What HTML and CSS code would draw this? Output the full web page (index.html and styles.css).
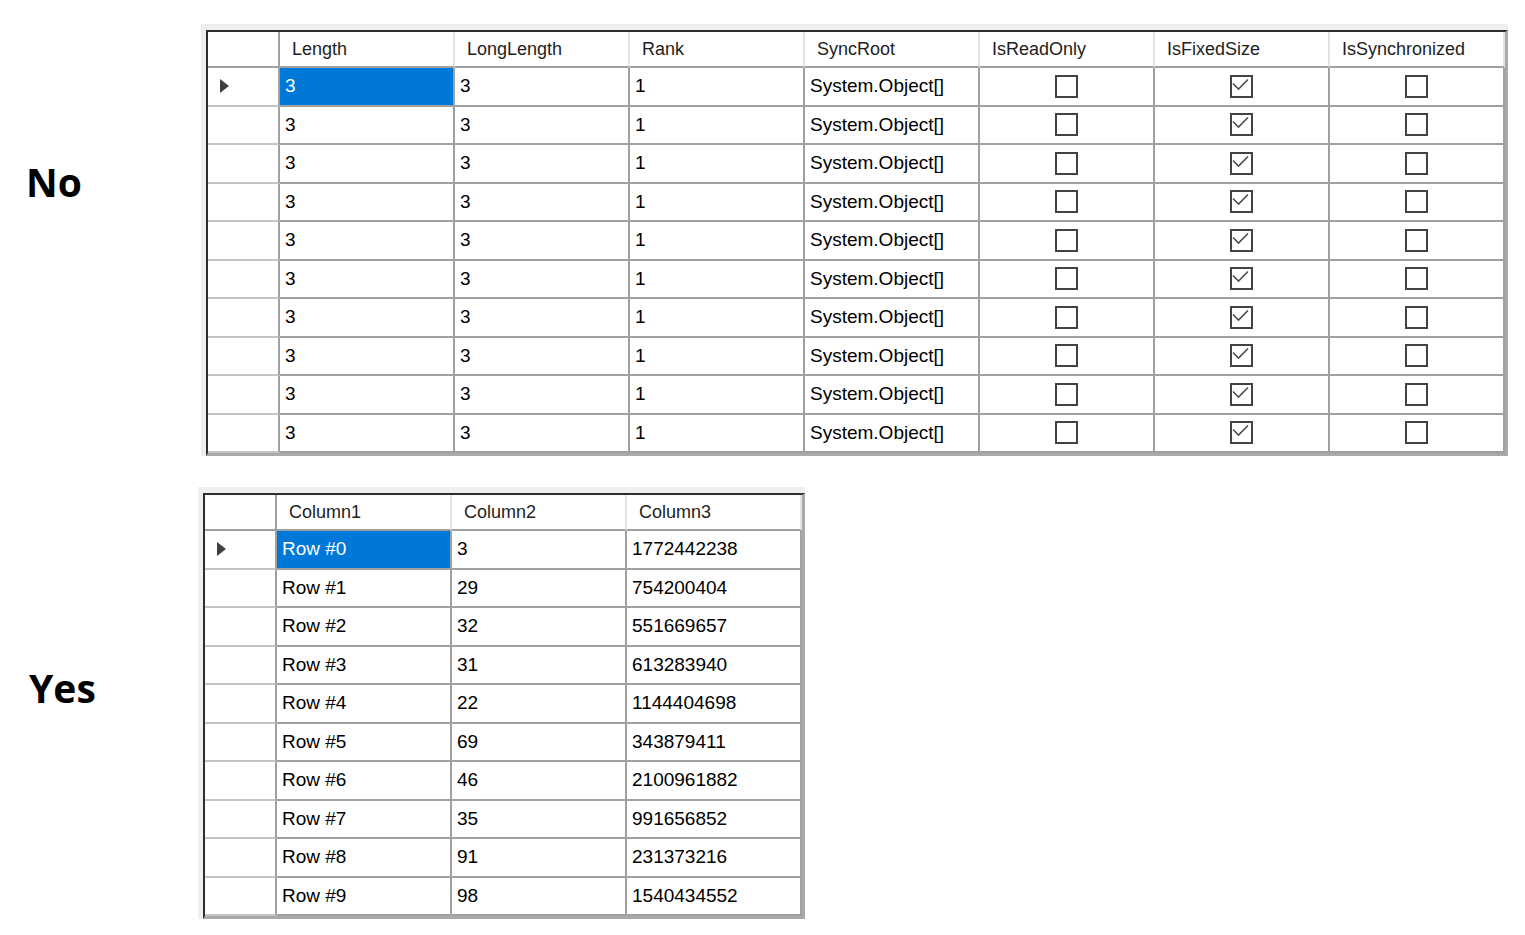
FILE: index.html
```html
<!DOCTYPE html>
<html lang="en">
<head>
    <meta charset="UTF-8">
    <meta name="viewport" content="width=device-width, initial-scale=1.0">
    <title>DataGridView binding</title>
    <link rel="stylesheet" href="styles.css">
</head>
<body>
    <div class="layout">
        <div class="label label-no">No</div>
        <div class="panel panel-wide">
            <div class="grid grid-arrays">
                <div class="head corner"></div>
                <div class="head">Length</div>
                <div class="head">LongLength</div>
                <div class="head">Rank</div>
                <div class="head">SyncRoot</div>
                <div class="head">IsReadOnly</div>
                <div class="head">IsFixedSize</div>
                <div class="head">IsSynchronized</div>

                <div class="rowhead"><span class="arrow"></span></div>
                <div class="cell selected">3</div><div class="cell">3</div><div class="cell">1</div><div class="cell">System.Object[]</div>
                <div class="cell center"><span class="box"></span></div>
                <div class="cell center"><span class="box"><svg viewBox="0 0 19 19"><polyline points="1,6.5 6.5,12 16,2.5"/></svg></span></div>
                <div class="cell center"><span class="box"></span></div>

                <div class="rowhead"></div>
                <div class="cell">3</div><div class="cell">3</div><div class="cell">1</div><div class="cell">System.Object[]</div>
                <div class="cell center"><span class="box"></span></div>
                <div class="cell center"><span class="box"><svg viewBox="0 0 19 19"><polyline points="1,6.5 6.5,12 16,2.5"/></svg></span></div>
                <div class="cell center"><span class="box"></span></div>

                <div class="rowhead"></div>
                <div class="cell">3</div><div class="cell">3</div><div class="cell">1</div><div class="cell">System.Object[]</div>
                <div class="cell center"><span class="box"></span></div>
                <div class="cell center"><span class="box"><svg viewBox="0 0 19 19"><polyline points="1,6.5 6.5,12 16,2.5"/></svg></span></div>
                <div class="cell center"><span class="box"></span></div>

                <div class="rowhead"></div>
                <div class="cell">3</div><div class="cell">3</div><div class="cell">1</div><div class="cell">System.Object[]</div>
                <div class="cell center"><span class="box"></span></div>
                <div class="cell center"><span class="box"><svg viewBox="0 0 19 19"><polyline points="1,6.5 6.5,12 16,2.5"/></svg></span></div>
                <div class="cell center"><span class="box"></span></div>

                <div class="rowhead"></div>
                <div class="cell">3</div><div class="cell">3</div><div class="cell">1</div><div class="cell">System.Object[]</div>
                <div class="cell center"><span class="box"></span></div>
                <div class="cell center"><span class="box"><svg viewBox="0 0 19 19"><polyline points="1,6.5 6.5,12 16,2.5"/></svg></span></div>
                <div class="cell center"><span class="box"></span></div>

                <div class="rowhead"></div>
                <div class="cell">3</div><div class="cell">3</div><div class="cell">1</div><div class="cell">System.Object[]</div>
                <div class="cell center"><span class="box"></span></div>
                <div class="cell center"><span class="box"><svg viewBox="0 0 19 19"><polyline points="1,6.5 6.5,12 16,2.5"/></svg></span></div>
                <div class="cell center"><span class="box"></span></div>

                <div class="rowhead"></div>
                <div class="cell">3</div><div class="cell">3</div><div class="cell">1</div><div class="cell">System.Object[]</div>
                <div class="cell center"><span class="box"></span></div>
                <div class="cell center"><span class="box"><svg viewBox="0 0 19 19"><polyline points="1,6.5 6.5,12 16,2.5"/></svg></span></div>
                <div class="cell center"><span class="box"></span></div>

                <div class="rowhead"></div>
                <div class="cell">3</div><div class="cell">3</div><div class="cell">1</div><div class="cell">System.Object[]</div>
                <div class="cell center"><span class="box"></span></div>
                <div class="cell center"><span class="box"><svg viewBox="0 0 19 19"><polyline points="1,6.5 6.5,12 16,2.5"/></svg></span></div>
                <div class="cell center"><span class="box"></span></div>

                <div class="rowhead"></div>
                <div class="cell">3</div><div class="cell">3</div><div class="cell">1</div><div class="cell">System.Object[]</div>
                <div class="cell center"><span class="box"></span></div>
                <div class="cell center"><span class="box"><svg viewBox="0 0 19 19"><polyline points="1,6.5 6.5,12 16,2.5"/></svg></span></div>
                <div class="cell center"><span class="box"></span></div>

                <div class="rowhead"></div>
                <div class="cell">3</div><div class="cell">3</div><div class="cell">1</div><div class="cell">System.Object[]</div>
                <div class="cell center"><span class="box"></span></div>
                <div class="cell center"><span class="box"><svg viewBox="0 0 19 19"><polyline points="1,6.5 6.5,12 16,2.5"/></svg></span></div>
                <div class="cell center"><span class="box"></span></div>
            </div>
        </div>

        <div class="label label-yes">Yes</div>
        <div class="panel">
            <div class="grid grid-rows">
                <div class="head corner"></div>
                <div class="head">Column1</div>
                <div class="head">Column2</div>
                <div class="head">Column3</div>

                <div class="rowhead"><span class="arrow"></span></div>
                <div class="cell selected">Row #0</div><div class="cell">3</div><div class="cell">1772442238</div>
                <div class="rowhead"></div>
                <div class="cell">Row #1</div><div class="cell">29</div><div class="cell">754200404</div>
                <div class="rowhead"></div>
                <div class="cell">Row #2</div><div class="cell">32</div><div class="cell">551669657</div>
                <div class="rowhead"></div>
                <div class="cell">Row #3</div><div class="cell">31</div><div class="cell">613283940</div>
                <div class="rowhead"></div>
                <div class="cell">Row #4</div><div class="cell">22</div><div class="cell">1144404698</div>
                <div class="rowhead"></div>
                <div class="cell">Row #5</div><div class="cell">69</div><div class="cell">343879411</div>
                <div class="rowhead"></div>
                <div class="cell">Row #6</div><div class="cell">46</div><div class="cell">2100961882</div>
                <div class="rowhead"></div>
                <div class="cell">Row #7</div><div class="cell">35</div><div class="cell">991656852</div>
                <div class="rowhead"></div>
                <div class="cell">Row #8</div><div class="cell">91</div><div class="cell">231373216</div>
                <div class="rowhead"></div>
                <div class="cell">Row #9</div><div class="cell">98</div><div class="cell">1540434552</div>
            </div>
        </div>
    </div>
</body>
</html>
```

FILE: styles.css
```css
body {
    margin: 0;
    padding-top: 24px;
    background: #fff;
    font-family: "Liberation Sans", Arial, sans-serif;
    color: #000;
}
.layout {
    display: grid;
    grid-template-columns: 198px auto;
    row-gap: 31px;
    justify-content: start;
    align-items: start;
}
.label {
    font-family: "Open Sans", "Liberation Sans", sans-serif;
    font-weight: 700;
    font-size: 39px;
    line-height: 46px;
    padding-left: 26px;
    color: #000;
}
.label-no {
    padding-top: 135px;
}
.label-yes {
    padding-top: 178px;
    padding-left: 29px;
}
.panel {
    background: #efefef;
    padding: 6px 0 0 5px;
    justify-self: start;
}
.panel-wide {
    margin-left: 3px;
}
.grid {
    display: grid;
    grid-template-rows: 36px;
    grid-auto-rows: 38.5px;
    background: #fff;
    border-top: 2px solid #2e2e2e;
    border-left: 2px solid #2e2e2e;
    border-right: 3px solid #a9a9a9;
    border-bottom: 3px solid #a9a9a9;
}
.grid-arrays {
    grid-template-columns: 72px repeat(7, 175px);
}
.grid-rows {
    grid-template-columns: 72px repeat(3, 175px);
}
.head, .rowhead, .cell {
    box-sizing: border-box;
    display: flex;
    align-items: center;
    white-space: nowrap;
    overflow: hidden;
    font-size: 19px;
}
.head {
    padding-left: 12px;
    font-size: 18px;
    color: #1e1e1e;
    border-right: 2px solid #e2e2e2;
    border-bottom: 2px solid #a0a0a0;
}
.head:last-child {
    border-right-color: #a0a0a0;
}
.head.corner {
    border-right-color: #a0a0a0;
}
.rowhead {
    padding-left: 12px;
    border-right: 2px solid #a0a0a0;
    border-bottom: 2px solid #c4c4c4;
}
.cell {
    padding-left: 5px;
    border-right: 2px solid #a0a0a0;
    border-bottom: 2px solid #a0a0a0;
}
.cell.center {
    justify-content: center;
    padding-left: 0;
}
.cell.selected {
    background: #0078d7;
    color: #fff;
}
.arrow {
    width: 0;
    height: 0;
    border-left: 9px solid #3f3f3f;
    border-top: 7px solid transparent;
    border-bottom: 7px solid transparent;
}
.box {
    display: block;
    box-sizing: border-box;
    width: 23px;
    height: 23px;
    border: 2px solid #434343;
    background: #fff;
}
.box svg {
    display: block;
    width: 19px;
    height: 19px;
}
.box polyline {
    fill: none;
    stroke: #4d4d4d;
    stroke-width: 1.6;
}
```
